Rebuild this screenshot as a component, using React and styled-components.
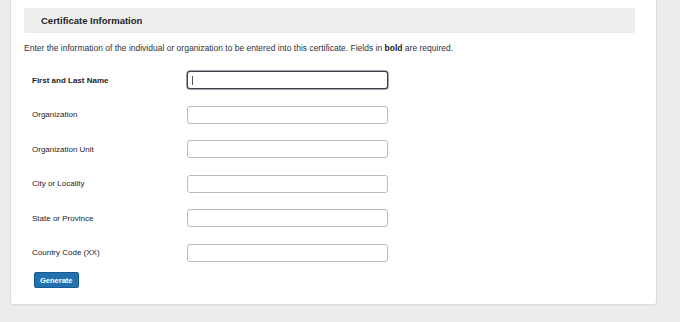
import styled, { createGlobalStyle } from "styled-components";

const GlobalStyle = createGlobalStyle`
  html, body {
    margin: 0;
    padding: 0;
    background: #ececec;
    font-family: "Liberation Sans", Arial, sans-serif;
    color: #1d2327;
  }
`;

const fields = [
  { label: "First and Last Name", required: true, focused: true },
  { label: "Organization" },
  { label: "Organization Unit" },
  { label: "City or Locality" },
  { label: "State or Province" },
  { label: "Country Code (XX)" },
];

export default function App() {
  return (
    <>
      <GlobalStyle />
      <Page>
        <Card>
          <Header>
            <Title>Certificate Information</Title>
          </Header>
          <Intro>
            Enter the information of the individual or organization to be entered into this
            certificate. Fields in <Strong>bold</Strong> are required.
          </Intro>
          <Form>
            {fields.map((f) => (
              <Row key={f.label}>
                <Label $bold={f.required}>{f.label}</Label>
                <Input $focused={f.focused}>{f.focused && <Caret />}</Input>
              </Row>
            ))}
          </Form>
          <Button type="button">Generate</Button>
        </Card>
      </Page>
    </>
  );
}

const Page = styled.div`
  width: 680px;
  height: 322px;
  padding: 0 23px 0 10px;
  box-sizing: border-box;
  overflow: hidden;
`;

const Card = styled.div`
  margin-top: -4px;
  background: #fff;
  border: 1px solid #dcdcdc;
  border-radius: 3px;
  box-shadow: 0 1px 1px rgba(0, 0, 0, 0.04);
  padding: 11px 21px 16px 13px;
  height: 309px;
  box-sizing: border-box;
`;

const Header = styled.div`
  background: #efefef;
  border: 1px solid #ebebeb;
  border-radius: 2px;
  height: 25px;
  box-sizing: border-box;
  display: flex;
  align-items: center;
  padding-left: 16px;
`;

const Title = styled.h2`
  margin: 0;
  font-size: 9.5px;
  font-weight: 700;
  color: #1d2327;
`;

const Intro = styled.p`
  margin: 9px 0 0 0;
  font-size: 8.5px;
  line-height: 12px;
  color: #2c3338;
`;

const Strong = styled.strong`
  font-weight: 700;
  color: #1d2327;
`;

const Form = styled.div`
  display: flex;
  flex-direction: column;
  margin-top: 9px;
  padding-left: 8px;
`;

const Row = styled.div`
  display: flex;
  align-items: center;
  height: 34.5px;
`;

const Label = styled.div`
  width: 155px;
  font-size: 8px;
  font-weight: ${(p) => (p.$bold ? 700 : 400)};
  color: #1d2327;
`;

const Input = styled.div`
  width: 201px;
  height: 18px;
  box-sizing: border-box;
  border: 1px solid ${(p) => (p.$focused ? "#3c434a" : "#b8bcc0")};
  box-shadow: ${(p) => (p.$focused ? "0 0 0 0.5px #3c434a" : "none")};
  border-radius: 3px;
  background: #fff;
  display: flex;
  align-items: center;
  padding-left: 4px;
`;

const Caret = styled.span`
  width: 1px;
  height: 9px;
  background: #555;
`;

const Button = styled.button`
  display: block;
  margin: 2px 0 0 10px;
  height: 16px;
  padding: 0 5px;
  background: #2271b1;
  border: 1px solid #1a5a8e;
  border-radius: 2px;
  color: #fff;
  font-family: "Liberation Sans", Arial, sans-serif;
  font-size: 7.5px;
  font-weight: 700;
  cursor: pointer;
`;
